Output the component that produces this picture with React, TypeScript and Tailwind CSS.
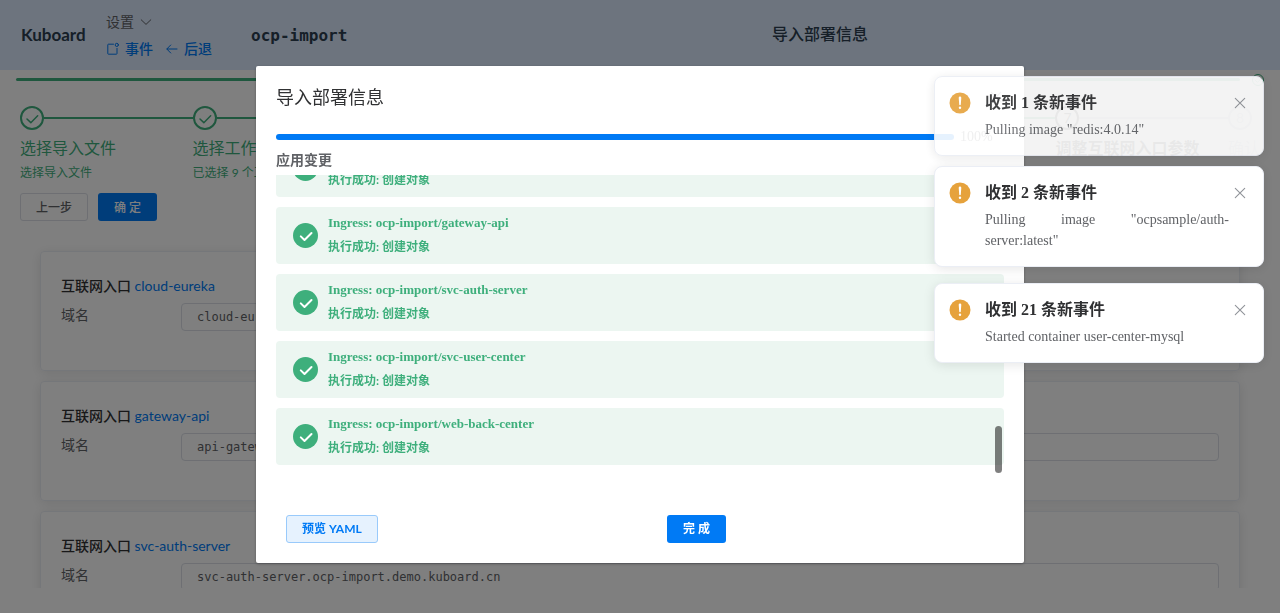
import { Fragment } from 'react'

const entries = [
  { name: 'cloud-eureka', host: 'cloud-eureka.ocp-import.demo.kuboard.cn' },
  { name: 'gateway-api', host: 'api-gateway.ocp-import.demo.kuboard.cn' },
  { name: 'svc-auth-server', host: 'svc-auth-server.ocp-import.demo.kuboard.cn' },
]

const steps = [
  { title: '选择导入文件', desc: '选择导入文件', done: true },
  { title: '选择工作负载', desc: '已选择 9 个工作负载', done: true },
  { title: '', desc: '', done: true },
  { title: '', desc: '', done: true },
  { title: '', desc: '', done: true },
  { title: '', desc: '', done: true },
  { title: '调整互联网入口参数', desc: '', done: false, active: true },
  { title: '确认', desc: '', done: false },
]

const changes = ['cloud-eureka', 'gateway-api', 'svc-auth-server', 'svc-user-center', 'web-back-center']

const notices = [
  { count: 1, text: 'Pulling image "redis:4.0.14"', className: 'mb-2.5 opacity-90' },
  { count: 2, text: 'Pulling image "ocpsample/auth-server:latest"', className: 'mb-4' },
  { count: 21, text: 'Started container user-center-mysql', className: '' },
]

function CheckIcon({ className = '' }: { className?: string }) {
  return (
    <svg viewBox="0 0 24 24" fill="none" stroke="currentColor" strokeWidth="1.8" strokeLinecap="round" strokeLinejoin="round" className={className}>
      <path d="M6 13.2l4.6 4.4 8.2-8.2" />
    </svg>
  )
}

function CloseIcon() {
  return (
    <svg viewBox="0 0 16 16" fill="none" stroke="currentColor" strokeWidth="1.1" strokeLinecap="round" className="h-4 w-4">
      <path d="M3.3 3.3l9.4 9.4M12.7 3.3l-9.4 9.4" />
    </svg>
  )
}

function Header() {
  return (
    <header className="flex h-[70px] shrink-0 items-center bg-[#dae8fd] px-5 text-[#2c3e50]">
      <div className="w-[86px] shrink-0 pl-px text-[17px] font-bold">Kuboard</div>
      <div className="w-[145px] shrink-0 pb-px text-sm">
        <button type="button" className="flex h-7 items-center gap-[5px] text-[#606266]">
          设置
          <svg viewBox="0 0 14 14" fill="none" stroke="currentColor" strokeWidth="1" strokeLinecap="round" className="h-3.5 w-3.5">
            <path d="M2.2 4.8L7 9.4l4.8-4.6" />
          </svg>
        </button>
        <nav className="flex h-[26px] items-center gap-3 font-medium text-[#007af5]">
          <a href="#events" className="flex items-center gap-[5px]">
            <svg viewBox="0 0 14 14" fill="none" stroke="currentColor" strokeWidth="1" strokeLinecap="round" strokeLinejoin="round" className="h-3.5 w-3.5">
              <path d="M7.5 2.2H2.4a.6.6 0 0 0-.6.6v8.8a.6.6 0 0 0 .6.6h8a.6.6 0 0 0 .6-.6V6.4" />
              <circle cx="10.8" cy="2.9" r="1.6" />
            </svg>
            事件
          </a>
          <a href="#back" className="flex items-center gap-[5px]">
            <svg viewBox="0 0 14 14" fill="none" stroke="currentColor" strokeWidth="1" strokeLinecap="round" strokeLinejoin="round" className="h-3.5 w-3.5">
              <path d="M12 7H2M5.7 3L1.8 7l3.9 4" />
            </svg>
            后退
          </a>
        </nav>
      </div>
      <div className="w-[129px] shrink-0 pt-0.5 font-['DejaVu_Sans_Mono',monospace] text-base font-bold">ocp-import</div>
      <h1 className="flex-1 pb-0.5 text-center text-base font-medium">导入部署信息</h1>
    </header>
  )
}

function Steps() {
  return (
    <ol className="flex px-5 pt-[17px]">
      {steps.map((step, i) => {
        const last = i === steps.length - 1
        const tone = step.done ? 'text-[#3eaf7c]' : step.active ? 'text-[#303133]' : 'text-[#c0c4cc]'
        return (
          <li key={i} className={`${last ? 'w-8 shrink-0' : 'min-w-0 flex-1'} ${tone}`}>
            <div className="flex items-center">
              <span className="flex h-6 w-6 shrink-0 items-center justify-center rounded-full border-2 border-current text-sm">
                {step.done ? <CheckIcon className="h-5 w-5" /> : i + 1}
              </span>
              {!last && <span className={`h-0.5 flex-1 ${step.done ? 'bg-[#3eaf7c]' : 'bg-[#c0c4cc]'}`} />}
            </div>
            <div className={`h-9 text-base leading-9 whitespace-nowrap ${step.active ? 'font-bold' : ''}`}>{step.title}</div>
            <div className="h-3 text-xs leading-[14px] whitespace-nowrap">{step.desc}</div>
          </li>
        )
      })}
    </ol>
  )
}

function Dialog() {
  return (
    <section
      role="dialog"
      aria-label="导入部署信息"
      className="mx-auto mt-[66px] w-3/5 rounded-xs bg-white px-5 pb-5 shadow-[0_1px_3px_rgba(0,0,0,0.3)]"
    >
      <div className="flex h-[62px] items-center justify-between text-[#303133]">
        <h2 className="text-lg">导入部署信息</h2>
        <button type="button" aria-label="关闭" className="text-[#909399]">
          <CloseIcon />
        </button>
      </div>
      <div className="flex h-[18px] items-center gap-1.5">
        <div className="h-1.5 flex-1 rounded-full bg-[#007af5]" />
        <span className="w-11 font-['Liberation_Serif',serif] text-sm text-[#606266]">100%</span>
      </div>
      <h3 className="h-[29px] text-sm leading-7 font-bold text-[#606266]">应用变更</h3>
      <div className="relative">
        <div className="flex h-[300px] flex-col justify-end gap-2.5 overflow-hidden pb-2.5">
          {changes.map((name) => (
            <div key={name} className="flex h-[57px] shrink-0 items-center rounded bg-[#ecf6f1] pl-[17px] text-[#3eaf7c]">
              <span className="mr-2.5 flex h-[25px] w-[25px] items-center justify-center rounded-full bg-[#3eaf7c] text-white">
                <svg viewBox="0 0 24 24" fill="none" stroke="currentColor" strokeWidth="2" strokeLinecap="round" strokeLinejoin="round" className="h-6 w-6">
                  <path d="M6.8 12.4l3.7 3.6 7-7" />
                </svg>
              </span>
              <div className="pb-0.5 font-bold">
                <p className="font-['Liberation_Serif','Noto_Sans_CJK_SC',serif] text-[13px] leading-6">Ingress: ocp-import/{name}</p>
                <p className="text-xs leading-6">执行成功: 创建对象</p>
              </div>
            </div>
          ))}
        </div>
        <div className="absolute right-0.5 bottom-0.5 h-[47px] w-[7px] rounded-full bg-black/50" />
      </div>
      <div className="grid grid-cols-[381px_1fr] px-2.5 pt-10 text-xs font-bold">
        <div>
          <button type="button" className="h-7 rounded-[3px] border border-[#99cafb] bg-[#e6f2fe] px-[15px] text-[#007af5]">
            预览 YAML
          </button>
        </div>
        <div>
          <button type="button" className="h-7 rounded-[3px] bg-[#007af5] px-4 text-white">
            完 成
          </button>
        </div>
      </div>
    </section>
  )
}

function Notices() {
  return (
    <aside className="fixed top-[76px] right-4 flex w-[330px] flex-col font-['Liberation_Serif','Noto_Sans_CJK_SC',serif]">
      {notices.map((n) => (
        <div
          key={n.count}
          className={`flex items-start rounded-lg border border-[#ebeef5] bg-white px-3.5 pt-3.5 pb-[15px] shadow-[0_2px_12px_rgba(0,0,0,0.1)] ${n.className}`}
        >
          <svg viewBox="0 0 22 22" className="mt-px h-[22px] w-[22px] shrink-0">
            <circle cx="11" cy="11" r="10.5" fill="#e6a23c" />
            <path d="M9.7 5.8a1.3 1.3 0 0 1 2.6 0l-.5 6.6a.8.8 0 0 1-1.6 0z" fill="#fff" />
            <circle cx="11" cy="15.8" r="1.2" fill="#fff" />
          </svg>
          <div className="ml-3.5 w-[244px]">
            <h2 className="text-base leading-6 font-bold text-[#303133]">收到 {n.count} 条新事件</h2>
            <p className="mt-1 text-justify text-sm leading-[21px] text-[#606266]">{n.text}</p>
          </div>
          <button type="button" aria-label="关闭" className="mt-1 ml-[3px] text-[#909399]">
            <CloseIcon />
          </button>
        </div>
      ))}
    </aside>
  )
}

export default function App() {
  return (
    <Fragment>
      <div className="flex h-screen flex-col overflow-hidden bg-white pb-[25px] font-[Lato,'Noto_Sans_CJK_SC',sans-serif]">
        <Header />
        <main className="min-h-0 flex-1 overflow-hidden">
          <div className="flex h-[19px] items-center gap-3 px-4">
            <div className="h-[3px] flex-1 rounded-full bg-[#3eaf7c]" />
            <span className="flex h-3 w-3 items-center justify-center rounded-full border border-[#3eaf7c] text-[#3eaf7c]">
              <CheckIcon className="h-2.5 w-2.5" />
            </span>
          </div>
          <Steps />
          <div className="mt-[15px] flex gap-2.5 px-5 text-xs font-medium">
            <button type="button" className="h-7 rounded-[3px] border border-[#dcdfe6] px-[15px] pt-0.5 text-[#606266]">上一步</button>
            <button type="button" className="h-7 rounded-[3px] bg-[#007af5] px-4 pt-0.5 text-white">确 定</button>
          </div>
          <div className="mt-[30px] flex flex-col gap-2.5 px-10">
            {entries.map((entry) => (
              <div key={entry.name} className="h-[120px] rounded border border-[#ebeef5] p-5 shadow-[0_2px_12px_rgba(0,0,0,0.1)]">
                <h4 className="h-[31px] text-sm leading-7 text-[#303133]">
                  <span className="font-medium">互联网入口</span> <a href="#ingress" className="text-[#007af5]">{entry.name}</a>
                </h4>
                <div className="flex">
                  <label htmlFor={entry.name} className="w-[120px] shrink-0 text-sm leading-6 text-[#606266]">域名</label>
                  <input
                    id={entry.name}
                    defaultValue={entry.host}
                    className="h-7 min-w-0 flex-1 rounded border border-[#dcdfe6] px-[15px] font-['DejaVu_Sans_Mono',monospace] text-xs text-[#606266]"
                  />
                </div>
              </div>
            ))}
          </div>
        </main>
      </div>
      <div className="fixed inset-0 bg-black/50 font-[Lato,'Noto_Sans_CJK_SC',sans-serif]">
        <Dialog />
      </div>
      <Notices />
    </Fragment>
  )
}
